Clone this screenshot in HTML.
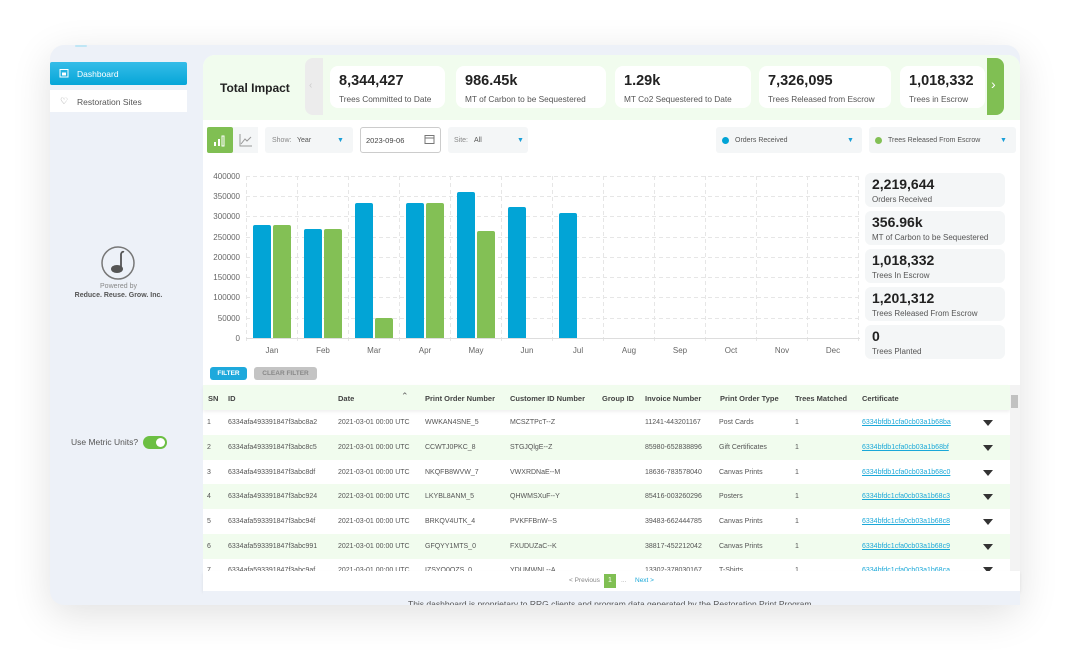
<!DOCTYPE html>
<html><head><meta charset="utf-8"><style>
*{box-sizing:border-box;margin:0;padding:0}
body{width:1070px;height:660px;background:#fff;font-family:"Liberation Sans",sans-serif;color:#333;position:relative;overflow:hidden}
.a{position:absolute}
.panel{left:50px;top:45px;width:970px;height:560px;background:#edf1f8;border-radius:14px;box-shadow:0 10px 40px rgba(0,0,0,.12);overflow:hidden}
.card{background:#fff;border-radius:8px;height:42px;top:66px}
.card b{position:absolute;left:9px;top:7px;font-size:14.5px;color:#222}
.card span{position:absolute;left:9px;top:28px;font-size:8.3px;color:#555;white-space:nowrap}
.sc{left:865px;width:140px;height:34px;background:#f4f6f7;border-radius:6px}
.sc b{position:absolute;left:7px;top:3px;font-size:14px;color:#222}
.sc span{position:absolute;left:7px;top:22px;font-size:8px;color:#555;white-space:nowrap}
.yl{left:205px;width:35px;text-align:right;font-size:8px;color:#666}
.ml{font-size:8px;color:#666;width:40px;text-align:center}
.bar{border-radius:2px 2px 0 0}
.bl{background:#02a4d6}.gr{background:#83c055}
.t{font-size:7px;color:#555;white-space:nowrap}
.th{font-size:7.5px;color:#444;font-weight:bold;white-space:nowrap}
.lk{color:#1aa8d8;text-decoration:underline}
.ar{width:0;height:0;border-left:5px solid transparent;border-right:5px solid transparent;border-top:6px solid #333;left:983px}
</style></head><body>
<div class="a panel"></div>
<div class="a" style="left:75px;top:45px;width:12px;height:2px;background:#bfe6f5;border-radius:2px"></div>
<!-- sidebar -->
<div class="a" style="left:50px;top:62px;width:137px;height:23px;background:linear-gradient(#35bde8,#06a6d8);border-radius:2px"></div>
<svg class="a" style="left:59px;top:68px" width="10" height="10" viewBox="0 0 10 10"><rect x="1" y="1.5" width="8" height="7.5" fill="none" stroke="#fff" stroke-width="1"/><rect x="3" y="4.5" width="4" height="3" fill="#fff"/></svg>
<div class="a" style="left:77px;top:69px;font-size:8.5px;color:#fff">Dashboard</div>
<div class="a" style="left:50px;top:90px;width:137px;height:22px;background:#fff"></div>
<div class="a" style="left:60px;top:96px;font-size:9px;color:#888">&#9825;</div>
<div class="a" style="left:77px;top:97px;font-size:8.5px;color:#555">Restoration Sites</div>
<svg class="a" style="left:100px;top:244px" width="38" height="36" viewBox="0 0 38 36"><circle cx="18" cy="19" r="16" fill="none" stroke="#777" stroke-width="1.5"/><ellipse cx="17" cy="25" rx="6" ry="4" fill="#555"/><path d="M21 25 V10 Q22 7 24 8" stroke="#555" stroke-width="1.8" fill="none"/></svg>
<div class="a" style="left:50px;top:283px;width:137px;text-align:center;font-size:7px;color:#888">Powered by</div>
<div class="a" style="left:50px;top:292px;width:137px;text-align:center;font-size:7px;color:#555;font-weight:bold">Reduce. Reuse. Grow. Inc.</div>
<div class="a" style="left:71px;top:437px;font-size:8.5px;color:#555">Use Metric Units?</div>
<div class="a" style="left:143px;top:436px;width:24px;height:13px;background:#6cbf43;border-radius:7px"></div>
<div class="a" style="left:156px;top:438px;width:9px;height:9px;background:#fff;border-radius:50%"></div>
<!-- main -->
<div class="a" style="left:203px;top:55px;width:817px;height:550px;background:#fff;border-radius:12px 12px 0 0"></div>
<div class="a" style="left:203px;top:55px;width:817px;height:65px;background:#f1fcee;border-radius:12px 12px 0 0"></div>
<div class="a" style="left:220px;top:81px;font-size:12px;font-weight:bold;color:#222">Total Impact</div>
<div class="a" style="left:305px;top:58px;width:18px;height:57px;background:#ececec;border-radius:8px 0 0 8px"></div>
<div class="a" style="left:309px;top:80px;font-size:10px;color:#ccc">&lsaquo;</div>
<div class="a card" style="left:330px;width:115px"><b>8,344,427</b><span>Trees Committed to Date</span></div>
<div class="a card" style="left:456px;width:150px"><b>986.45k</b><span>MT of Carbon to be Sequestered</span></div>
<div class="a card" style="left:615px;width:136px"><b>1.29k</b><span>MT Co2 Sequestered to Date</span></div>
<div class="a card" style="left:759px;width:132px"><b>7,326,095</b><span>Trees Released from Escrow</span></div>
<div class="a card" style="left:900px;width:85px"><b>1,018,332</b><span>Trees in Escrow</span></div>
<div class="a" style="left:987px;top:58px;width:17px;height:57px;background:#80bf53;border-radius:0 8px 8px 0"></div>
<div class="a" style="left:991px;top:76px;font-size:14px;color:#fff">&rsaquo;</div>
<!-- controls -->
<div class="a" style="left:207px;top:127px;width:26px;height:26px;background:#80bf53;border-radius:2px"></div>
<svg class="a" style="left:213px;top:133px" width="14" height="14" viewBox="0 0 14 14"><rect x="1" y="9" width="2" height="4" fill="#fff"/><rect x="5" y="6" width="2" height="7" fill="#fff"/><rect x="9" y="3" width="2" height="10" fill="none" stroke="#fff" stroke-width="1"/></svg>
<div class="a" style="left:233px;top:127px;width:25px;height:26px;background:#f4f6f7"></div>
<svg class="a" style="left:239px;top:133px" width="14" height="14" viewBox="0 0 14 14"><path d="M1 1V13H13" stroke="#999" fill="none"/><path d="M2 11L6 6L8 8L12 4" stroke="#999" fill="none"/></svg>
<div class="a" style="left:265px;top:127px;width:88px;height:26px;background:#f4f6f7;border-radius:3px"></div>
<div class="a" style="left:272px;top:137px;font-size:7px;color:#888">Show:</div>
<div class="a" style="left:297px;top:137px;font-size:7px;color:#555">Year</div>
<div class="a" style="left:337px;top:137px;font-size:7px;color:#1a9fd8">&#9660;</div>
<div class="a" style="left:360px;top:127px;width:81px;height:26px;border:1px solid #ccc;border-radius:3px;background:#fff"></div>
<div class="a" style="left:366px;top:136px;font-size:7.5px;color:#444">2023-09-06</div>
<svg class="a" style="left:424px;top:134px" width="11" height="11" viewBox="0 0 11 11"><rect x="1" y="1.5" width="9" height="8" fill="none" stroke="#777"/><path d="M1 4H10" stroke="#777"/></svg>
<div class="a" style="left:448px;top:127px;width:80px;height:26px;background:#f4f6f7;border-radius:3px"></div>
<div class="a" style="left:454px;top:137px;font-size:7px;color:#888">Site:</div>
<div class="a" style="left:474px;top:137px;font-size:7px;color:#555">All</div>
<div class="a" style="left:517px;top:137px;font-size:7px;color:#1a9fd8">&#9660;</div>
<div class="a" style="left:716px;top:127px;width:146px;height:26px;background:#f4f6f7;border-radius:3px"></div>
<div class="a" style="left:722px;top:137px;width:7px;height:7px;border-radius:50%;background:#02a4d6"></div>
<div class="a" style="left:735px;top:137px;font-size:7px;color:#555">Orders Received</div>
<div class="a" style="left:847px;top:137px;font-size:7px;color:#1a9fd8">&#9660;</div>
<div class="a" style="left:869px;top:127px;width:147px;height:26px;background:#f4f6f7;border-radius:3px"></div>
<div class="a" style="left:875px;top:137px;width:7px;height:7px;border-radius:50%;background:#83c055"></div>
<div class="a" style="left:888px;top:137px;font-size:7px;color:#555">Trees Released From Escrow</div>
<div class="a" style="left:1000px;top:137px;font-size:7px;color:#1a9fd8">&#9660;</div>
<!-- chart -->
<svg class="a" style="left:0;top:0" width="1070" height="660">
<g stroke="#e6e6e6" stroke-dasharray="4,3" stroke-width="1">
<line x1="246" x2="860" y1="176.5" y2="176.5"/><line x1="246" x2="860" y1="196.5" y2="196.5"/><line x1="246" x2="860" y1="216.5" y2="216.5"/><line x1="246" x2="860" y1="237.5" y2="237.5"/><line x1="246" x2="860" y1="257.5" y2="257.5"/><line x1="246" x2="860" y1="277.5" y2="277.5"/><line x1="246" x2="860" y1="297.5" y2="297.5"/><line x1="246" x2="860" y1="318.5" y2="318.5"/>
<line x1="246.5" x2="246.5" y1="176" y2="343"/><line x1="297.5" x2="297.5" y1="176" y2="343"/><line x1="348.5" x2="348.5" y1="176" y2="343"/><line x1="399.5" x2="399.5" y1="176" y2="343"/><line x1="450.5" x2="450.5" y1="176" y2="343"/><line x1="501.5" x2="501.5" y1="176" y2="343"/><line x1="552.5" x2="552.5" y1="176" y2="343"/><line x1="603.5" x2="603.5" y1="176" y2="343"/><line x1="654.5" x2="654.5" y1="176" y2="343"/><line x1="705.5" x2="705.5" y1="176" y2="343"/><line x1="756.5" x2="756.5" y1="176" y2="343"/><line x1="807.5" x2="807.5" y1="176" y2="343"/><line x1="858.5" x2="858.5" y1="176" y2="343"/>
</g>
<line x1="246" x2="860" y1="338.5" y2="338.5" stroke="#ddd"/>
</svg>
<div class="a yl" style="top:172px">400000</div><div class="a yl" style="top:192px">350000</div><div class="a yl" style="top:212px">300000</div><div class="a yl" style="top:233px">250000</div><div class="a yl" style="top:253px">200000</div><div class="a yl" style="top:273px">150000</div><div class="a yl" style="top:293px">100000</div><div class="a yl" style="top:314px">50000</div><div class="a yl" style="top:334px">0</div>
<div class="a bar bl" style="left:253px;top:225px;width:18px;height:113px"></div><div class="a bar gr" style="left:273px;top:225px;width:18px;height:113px"></div>
<div class="a bar bl" style="left:304px;top:229px;width:18px;height:109px"></div><div class="a bar gr" style="left:324px;top:229px;width:18px;height:109px"></div>
<div class="a bar bl" style="left:355px;top:203px;width:18px;height:135px"></div><div class="a bar gr" style="left:375px;top:318px;width:18px;height:20px"></div>
<div class="a bar bl" style="left:406px;top:203px;width:18px;height:135px"></div><div class="a bar gr" style="left:426px;top:203px;width:18px;height:135px"></div>
<div class="a bar bl" style="left:457px;top:192px;width:18px;height:146px"></div><div class="a bar gr" style="left:477px;top:231px;width:18px;height:107px"></div>
<div class="a bar bl" style="left:508px;top:207px;width:18px;height:131px"></div>
<div class="a bar bl" style="left:559px;top:213px;width:18px;height:125px"></div>
<div class="a ml" style="left:252px;top:346px">Jan</div><div class="a ml" style="left:303px;top:346px">Feb</div><div class="a ml" style="left:354px;top:346px">Mar</div><div class="a ml" style="left:405px;top:346px">Apr</div><div class="a ml" style="left:456px;top:346px">May</div><div class="a ml" style="left:507px;top:346px">Jun</div><div class="a ml" style="left:558px;top:346px">Jul</div><div class="a ml" style="left:609px;top:346px">Aug</div><div class="a ml" style="left:660px;top:346px">Sep</div><div class="a ml" style="left:711px;top:346px">Oct</div><div class="a ml" style="left:762px;top:346px">Nov</div><div class="a ml" style="left:813px;top:346px">Dec</div>
<div class="a sc" style="top:173px"><b>2,219,644</b><span>Orders Received</span></div>
<div class="a sc" style="top:211px"><b>356.96k</b><span>MT of Carbon to be Sequestered</span></div>
<div class="a sc" style="top:249px"><b>1,018,332</b><span>Trees In Escrow</span></div>
<div class="a sc" style="top:287px"><b>1,201,312</b><span>Trees Released From Escrow</span></div>
<div class="a sc" style="top:325px"><b>0</b><span>Trees Planted</span></div>
<!-- filters -->
<div class="a" style="left:210px;top:367px;width:37px;height:13px;background:#1ea9dc;border-radius:3px;color:#fff;font-size:6.5px;font-weight:bold;text-align:center;line-height:13px">FILTER</div>
<div class="a" style="left:254px;top:367px;width:63px;height:13px;background:#c4c4c4;border-radius:3px;color:#888;font-size:6.5px;font-weight:bold;text-align:center;line-height:13px">CLEAR FILTER</div>
<!-- table -->
<div class="a" style="left:203px;top:385px;width:807px;height:25px;background:#f1fcee;box-shadow:0 2px 3px rgba(0,0,0,.06)"></div>
<div class="a" style="left:203px;top:435px;width:807px;height:25px;background:#f1fcee"></div>
<div class="a" style="left:203px;top:484px;width:807px;height:25px;background:#f1fcee"></div>
<div class="a" style="left:203px;top:534px;width:807px;height:25px;background:#f1fcee"></div>
<div class="a" style="left:1010px;top:385px;width:10px;height:186px;background:#f3f3f3"></div>
<div class="a" style="left:1011px;top:395px;width:7px;height:13px;background:#c1c1c1"></div>
<div class="a th" style="left:208px;top:394px">SN</div><div class="a th" style="left:228px;top:394px">ID</div><div class="a th" style="left:338px;top:394px">Date</div><div class="a" style="left:401px;top:391px;font-size:9px;color:#666">&#8963;</div><div class="a th" style="left:425px;top:394px">Print Order Number</div><div class="a th" style="left:510px;top:394px">Customer ID Number</div><div class="a th" style="left:602px;top:394px">Group ID</div><div class="a th" style="left:645px;top:394px">Invoice Number</div><div class="a th" style="left:720px;top:394px">Print Order Type</div><div class="a th" style="left:795px;top:394px">Trees Matched</div><div class="a th" style="left:862px;top:394px">Certificate</div>
<div class="a t" style="left:207px;top:419px">1</div><div class="a t" style="left:228px;top:419px">6334afa493391847f3abc8a2</div><div class="a t" style="left:338px;top:419px">2021-03-01 00:00 UTC</div><div class="a t" style="left:425px;top:419px">WWKAN4SNE_5</div><div class="a t" style="left:510px;top:419px">MCSZTPcT--Z</div><div class="a t" style="left:645px;top:419px">11241-443201167</div><div class="a t" style="left:719px;top:419px">Post Cards</div><div class="a t" style="left:795px;top:419px">1</div><div class="a t lk" style="left:862px;top:419px">6334bfdb1cfa0cb03a1b68ba</div><div class="a ar" style="top:420px"></div>
<div class="a t" style="left:207px;top:444px">2</div><div class="a t" style="left:228px;top:444px">6334afa493391847f3abc8c5</div><div class="a t" style="left:338px;top:444px">2021-03-01 00:00 UTC</div><div class="a t" style="left:425px;top:444px">CCWTJ0PKC_8</div><div class="a t" style="left:510px;top:444px">STGJQlgE--Z</div><div class="a t" style="left:645px;top:444px">85980-652838896</div><div class="a t" style="left:719px;top:444px">Gift Certificates</div><div class="a t" style="left:795px;top:444px">1</div><div class="a t lk" style="left:862px;top:444px">6334bfdb1cfa0cb03a1b68bf</div><div class="a ar" style="top:445px"></div>
<div class="a t" style="left:207px;top:469px">3</div><div class="a t" style="left:228px;top:469px">6334afa493391847f3abc8df</div><div class="a t" style="left:338px;top:469px">2021-03-01 00:00 UTC</div><div class="a t" style="left:425px;top:469px">NKQFB8WVW_7</div><div class="a t" style="left:510px;top:469px">VWXRDNaE--M</div><div class="a t" style="left:645px;top:469px">18636-783578040</div><div class="a t" style="left:719px;top:469px">Canvas Prints</div><div class="a t" style="left:795px;top:469px">1</div><div class="a t lk" style="left:862px;top:469px">6334bfdb1cfa0cb03a1b68c0</div><div class="a ar" style="top:470px"></div>
<div class="a t" style="left:207px;top:493px">4</div><div class="a t" style="left:228px;top:493px">6334afa493391847f3abc924</div><div class="a t" style="left:338px;top:493px">2021-03-01 00:00 UTC</div><div class="a t" style="left:425px;top:493px">LKYBL8ANM_5</div><div class="a t" style="left:510px;top:493px">QHWMSXuF--Y</div><div class="a t" style="left:645px;top:493px">85416-003260296</div><div class="a t" style="left:719px;top:493px">Posters</div><div class="a t" style="left:795px;top:493px">1</div><div class="a t lk" style="left:862px;top:493px">6334bfdc1cfa0cb03a1b68c3</div><div class="a ar" style="top:494px"></div>
<div class="a t" style="left:207px;top:518px">5</div><div class="a t" style="left:228px;top:518px">6334afa593391847f3abc94f</div><div class="a t" style="left:338px;top:518px">2021-03-01 00:00 UTC</div><div class="a t" style="left:425px;top:518px">BRKQV4UTK_4</div><div class="a t" style="left:510px;top:518px">PVKFFBnW--S</div><div class="a t" style="left:645px;top:518px">39483-662444785</div><div class="a t" style="left:719px;top:518px">Canvas Prints</div><div class="a t" style="left:795px;top:518px">1</div><div class="a t lk" style="left:862px;top:518px">6334bfdc1cfa0cb03a1b68c8</div><div class="a ar" style="top:519px"></div>
<div class="a t" style="left:207px;top:543px">6</div><div class="a t" style="left:228px;top:543px">6334afa593391847f3abc991</div><div class="a t" style="left:338px;top:543px">2021-03-01 00:00 UTC</div><div class="a t" style="left:425px;top:543px">GFQYY1MTS_0</div><div class="a t" style="left:510px;top:543px">FXUDUZaC--K</div><div class="a t" style="left:645px;top:543px">38817-452212042</div><div class="a t" style="left:719px;top:543px">Canvas Prints</div><div class="a t" style="left:795px;top:543px">1</div><div class="a t lk" style="left:862px;top:543px">6334bfdc1cfa0cb03a1b68c9</div><div class="a ar" style="top:544px"></div>
<div class="a" style="left:203px;top:560px;width:807px;height:11px;overflow:hidden">
<div class="a t" style="left:4px;top:7px">7</div><div class="a t" style="left:25px;top:7px">6334afa593391847f3abc9af</div><div class="a t" style="left:135px;top:7px">2021-03-01 00:00 UTC</div><div class="a t" style="left:222px;top:7px">IZSYQ0QZS_0</div><div class="a t" style="left:307px;top:7px">YDUMWNL--A</div><div class="a t" style="left:442px;top:7px">13302-378030167</div><div class="a t" style="left:516px;top:7px">T-Shirts</div><div class="a t" style="left:592px;top:7px">1</div><div class="a t lk" style="left:659px;top:7px">6334bfdc1cfa0cb03a1b68ca</div><div class="a ar" style="left:780px;top:7px"></div>
</div>
<div class="a" style="left:203px;top:571px;width:817px;height:20px;background:#fff;box-shadow:0 2px 3px rgba(0,0,0,.08)"></div>
<div class="a" style="left:569px;top:577px;font-size:6.5px;color:#888">&lt; Previous</div>
<div class="a" style="left:604px;top:574px;width:12px;height:14px;background:#80bf53;color:#fff;font-size:7px;text-align:center;line-height:14px">1</div>
<div class="a" style="left:621px;top:577px;font-size:6.5px;color:#aaa">...</div>
<div class="a" style="left:635px;top:577px;font-size:6.5px;color:#1aa8d8">Next &gt;</div>
<div class="a" style="left:203px;top:591px;width:817px;height:14px;background:#edf1f8;overflow:hidden"><div style="position:absolute;left:205px;top:8px;font-size:8.5px;color:#555;white-space:nowrap">This dashboard is proprietary to RRG clients and program data generated by the Restoration Print Program.</div></div>
</body></html>
